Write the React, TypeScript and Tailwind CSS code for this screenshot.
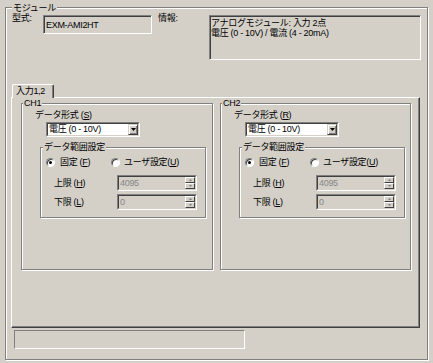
import React from "react";

function U({ c }: { c: string }) {
  return <span className="underline underline-offset-1">{c}</span>;
}

function Group({
  label,
  className,
  labelClass,
  children,
}: {
  label: React.ReactNode;
  className: string;
  labelClass: string;
  children?: React.ReactNode;
}) {
  return (
    <div
      className={`relative shrink-0 border border-[#808080] shadow-[inset_1px_1px_0_#fff,1px_1px_0_#fff] ${className}`}
    >
      <span className={`absolute top-[-6px] px-[1px] bg-[#d4d0c8] leading-[10px] whitespace-nowrap ${labelClass}`}>
        {label}
      </span>
      {children}
    </div>
  );
}

function Arrow({ up, color }: { up?: boolean; color: string }) {
  return up ? (
    <svg width="5" height="3" viewBox="0 0 5 3" className="block">
      <path d="M2.5 0 L5 3 L0 3 Z" fill={color} />
    </svg>
  ) : (
    <svg width="5" height="3" viewBox="0 0 5 3" className="block">
      <path d="M0 0 L5 0 L2.5 3 Z" fill={color} />
    </svg>
  );
}

function SpinBtn({ up }: { up?: boolean }) {
  return (
    <div className="flex h-[6px] items-center justify-center border border-t-white border-l-white border-b-[#404040] border-r-[#404040] bg-[#d4d0c8]">
      <svg width="3" height="2" viewBox="0 0 3 2" className="block">
        {up ? <path d="M1.5 0 L3 2 L0 2 Z" fill="#808080" /> : <path d="M0 0 L3 0 L1.5 2 Z" fill="#808080" />}
      </svg>
    </div>
  );
}

function Spin({ value }: { value: string }) {
  return (
    <div className="flex w-[80px] h-[16px] border border-t-[#808080] border-l-[#808080] border-b-white border-r-white">
      <div className="flex flex-1 border border-t-[#404040] border-l-[#404040] border-b-[#d4d0c8] border-r-[#d4d0c8]">
        <div className="flex-1 pl-[1px] leading-[12px] text-[#868686]">{value}</div>
        <div className="flex w-[10px] flex-col">
          <SpinBtn up />
          <SpinBtn />
        </div>
      </div>
    </div>
  );
}

function Combo() {
  return (
    <div className="ml-[24px] mt-[2px] flex w-[94px] h-[15px] border border-t-[#808080] border-l-[#808080] border-b-white border-r-white">
      <div className="flex flex-1 items-center bg-white border border-t-[#404040] border-l-[#404040] border-b-[#d4d0c8] border-r-[#d4d0c8]">
        <div className="flex-1 pl-[1px] leading-[11px] whitespace-nowrap">電圧 (0 - 10V)</div>
        <div className="flex h-[11px] w-[10px] items-center justify-center bg-[#d4d0c8] border border-t-[#d4d0c8] border-l-[#d4d0c8] border-b-[#404040] border-r-[#404040] shadow-[inset_1px_1px_0_#fff,inset_-1px_-1px_0_#808080]">
          <Arrow color="#000" />
        </div>
      </div>
    </div>
  );
}

function Radio({ checked }: { checked?: boolean }) {
  return (
    <div className="flex h-[9px] w-[9px] shrink-0 items-center justify-center rounded-full bg-white border border-t-[#808080] border-l-[#808080] border-b-white border-r-white shadow-[inset_1px_1px_0_#404040]">
      {checked ? <div className="h-[3px] w-[3px] rounded-full bg-black" /> : null}
    </div>
  );
}

function Channel({ name, key1, width }: { name: string; key1: string; width: string }) {
  return (
    <Group label={name} className={width} labelClass="left-[1px]">
      <div className="flex flex-col">
        <div className="ml-[13px] mt-[6px] h-[10px] leading-[10px] whitespace-nowrap">
          データ形式 (<U c={key1} />)
        </div>
        <Combo />
        <div className="ml-[18px] mt-[10px]">
          <Group label="データ範囲設定" className="w-[166px] h-[71px]" labelClass="left-[2px]">
            <div className="flex flex-col">
              <div className="ml-[5px] mt-[9px] flex h-[10px] items-center">
                <div className="flex w-[65px] items-center">
                  <Radio checked />
                  <span className="ml-[5px] whitespace-nowrap leading-[10px]">
                    固定 (<U c="F" />)
                  </span>
                </div>
                <div className="flex items-center">
                  <Radio />
                  <span className="ml-[4px] whitespace-nowrap leading-[10px]">
                    ユーザ設定(<U c="U" />)
                  </span>
                </div>
              </div>
              <div className="ml-[13px] mt-[8px] flex items-center">
                <span className="w-[63px] whitespace-nowrap leading-[10px]">
                  上限 (<U c="H" />)
                </span>
                <Spin value="4095" />
              </div>
              <div className="ml-[13px] mt-[3px] flex items-center">
                <span className="w-[63px] whitespace-nowrap leading-[10px]">
                  下限 (<U c="L" />)
                </span>
                <Spin value="0" />
              </div>
            </div>
          </Group>
        </div>
      </div>
    </Group>
  );
}

export default function App() {
  return (
    <div className="w-[433px] h-[363px] bg-[#d4d0c8] pt-[7px] pl-[5px] pr-[5px] pb-[3px] text-black text-[9px] leading-[10px] tracking-[-0.3px] font-['Liberation_Sans','Noto_Sans_CJK_JP',sans-serif]">
      <div className="relative flex h-full flex-col border border-[#808080] shadow-[inset_1px_1px_0_#fff,1px_1px_0_#fff]">
        <span className="absolute left-[6px] top-[-5px] px-[1px] bg-[#d4d0c8] leading-[10px]">モジュール</span>

        <div className="mt-[4px] flex items-start">
          <span className="ml-[6px] mt-[1px] w-[31px] leading-[10px]">型式:</span>
          <div className="mt-[3px] flex h-[19px] w-[109px] items-center border border-t-[#808080] border-l-[#808080] border-b-white border-r-white shadow-[inset_1px_1px_0_#404040]">
            <span className="pl-[2px] leading-[10px]">EXM-AMI2HT</span>
          </div>
          <span className="ml-[6px] mt-[1px] w-[51px] leading-[10px]">情報:</span>
          <div className="mt-[3px] h-[45px] w-[212px] border border-t-[#808080] border-l-[#808080] border-b-white border-r-white shadow-[inset_1px_1px_0_#404040] pl-[1px] pt-[2px]">
            <div className="leading-[10px] whitespace-nowrap">アナログモジュール: 入力 2点</div>
            <div className="leading-[10px] whitespace-nowrap">電圧 (0 - 10V) / 電流 (4 - 20mA)</div>
          </div>
        </div>

        <div className="mt-[24px] flex flex-col">
          <div className="relative z-10 mb-[-1px] ml-[6px] h-[14px] w-[42px] rounded-t-[2px] bg-[#d4d0c8] border-t border-l border-r border-t-white border-l-white border-r-[#404040] shadow-[inset_-1px_0_0_#808080] pl-[3px] pt-[1px]">
            <span className="leading-[10px] whitespace-nowrap">入力1,2</span>
          </div>
          <div className="ml-[5px] h-[231px] w-[409px] border border-t-white border-l-white border-b-[#404040] border-r-[#404040] shadow-[inset_-1px_-1px_0_#808080]">
            <div className="ml-[9px] mt-[5px] flex gap-[7px]">
              <Channel name="CH1" key1="S" width="w-[192px] h-[167px]" />
              <Channel name="CH2" key1="R" width="w-[191px] h-[167px]" />
            </div>
          </div>
        </div>

        <div className="ml-[8px] mt-[2px] h-[19px] w-[231px] border border-t-[#808080] border-l-[#808080] border-b-white border-r-white" />
      </div>
    </div>
  );
}
